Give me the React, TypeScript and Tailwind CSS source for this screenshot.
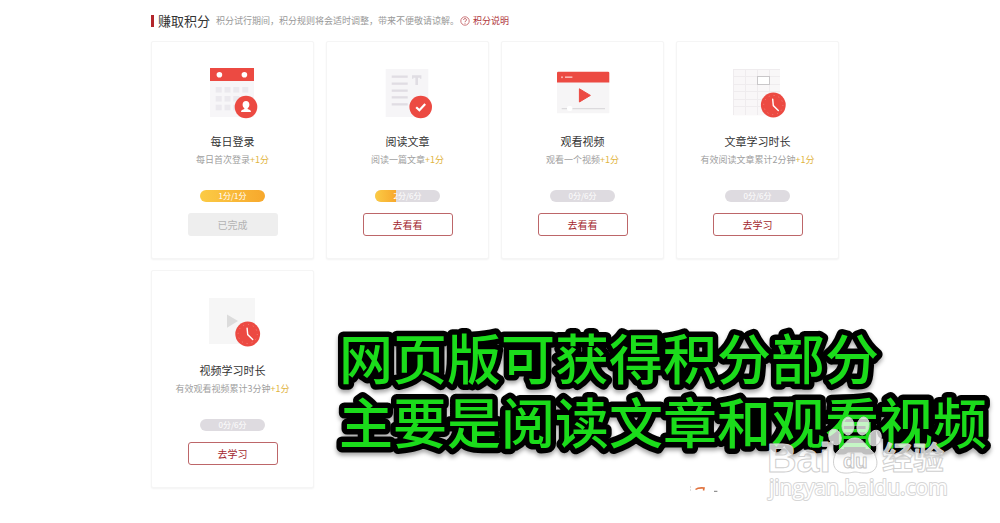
import React from 'react';

type Task = {
  title: string;
  desc: string;
  progress: string;
  percent: number;
  action: string;
  done?: boolean;
  icon: React.ReactNode;
};

const Clock: React.FC<{ cx: number; cy: number }> = ({ cx, cy }) => (
  <g transform={`translate(${cx} ${cy})`}>
    <circle r="12.4" fill="#ec4a42" />
    <circle r="9.6" fill="none" stroke="#f5827c" strokeWidth="1" strokeDasharray="1 4.03" />
    <path d="M-0.6 -5.8 L0 0.6 L5 5.4" fill="none" stroke="#fff" strokeWidth="1.4" strokeLinecap="round" />
  </g>
);

const LoginIcon = () => (
  <svg viewBox="0 0 51 51" className="size-[51px] overflow-visible" aria-hidden="true">
    <rect x="3" y="14" width="44" height="36" fill="#f7f6f8" />
    <rect x="3" y="1" width="44" height="13" fill="#ec4a42" />
    <circle cx="12.4" cy="7.7" r="2.8" fill="#fff" />
    <circle cx="37.4" cy="7.7" r="2.8" fill="#fff" />
    {[20, 29, 37.7].map((y) =>
      [8.7, 17.5, 26.3, 35.3].map((x) => (
        <rect key={`${x}-${y}`} x={x} y={y} width="6" height="5.6" fill="#ebe9ee" />
      ))
    )}
    <circle cx="39" cy="40" r="11.3" fill="#ec4a42" />
    <path
      d="M39 34 C36.8 34 35.6 35.6 35.6 37.6 C35.6 39.2 36.2 40.6 37.4 41.4 V42 C35.6 42.5 34 43 34 45 H44 C44 43 42.4 42.5 40.6 42 V41.4 C41.8 40.6 42.4 39.2 42.4 37.6 C42.4 35.6 41.2 34 39 34 Z"
      fill="#fff"
    />
  </svg>
);

const ArticleIcon = () => (
  <svg viewBox="0 0 51 51" className="size-[51px] overflow-visible" aria-hidden="true">
    <rect x="3.7" y="2" width="42.6" height="48" fill="#f6f5f7" />
    {[8.5, 15.5, 22.5, 29.2, 36.2].map((y) => (
      <rect key={y} x="9.7" y={y} width="16" height="2.3" fill="#e0dde3" />
    ))}
    <path d="M30 8.3 H39.4 V11.8 H38 V10.8 H36 V18 H33.4 V10.8 H31.4 V11.8 H30 Z" fill="#e0dde3" />
    <circle cx="38.7" cy="40" r="11.3" fill="#ec4a42" />
    <path d="M34.2 40.2 L37.4 43.2 L43.2 37" fill="none" stroke="#fff" strokeWidth="2.2" />
  </svg>
);

const VideoIcon = () => (
  <svg viewBox="0 0 51 51" className="size-[51px] overflow-visible" aria-hidden="true">
    <path d="M0 15 H52.3 V46.3 H0 Z" fill="#f6f5f6" />
    <path d="M0 15.4 V6 Q0 4.8 1.2 4.8 H51 Q52.3 4.8 52.3 6 V15.4 Z" fill="#ec4a42" />
    <circle cx="5" cy="10.2" r="1" fill="#f9b5b1" />
    <rect x="8" y="9.4" width="7.4" height="1.6" fill="#f9b5b1" />
    <path d="M22.4 21.8 L33.4 28.4 L22.4 35 Z" fill="#ec4a42" stroke="#ec4a42" strokeLinejoin="round" />
    <rect x="4.7" y="41.2" width="43.3" height="1" fill="#d5d4d6" />
    <rect x="10" y="39" width="5.4" height="5" rx="2" fill="#fff" />
  </svg>
);

const ArticleTimeIcon = () => (
  <svg viewBox="0 0 51 51" className="size-[51px] overflow-visible" aria-hidden="true">
    <rect x="1.3" y="2" width="46.7" height="46.4" fill="#f9f7f8" />
    <path
      d="M1.5 2 V48 M13.5 2 V48 M25.5 2 V48 M37.5 2 V48 M1.3 2.5 H48 M1.3 9.5 H48 M1.3 17.5 H48 M1.3 24.5 H48 M1.3 32.5 H48 M1.3 39.5 H48"
      stroke="#efecee"
      fill="none"
    />
    <rect x="25.5" y="9.5" width="12" height="8" fill="#fff" stroke="#c9c7c9" />
    <Clock cx={41.3} cy={38} />
  </svg>
);

const VideoTimeIcon = () => (
  <svg viewBox="0 0 51 51" className="size-[51px] overflow-visible" aria-hidden="true">
    <rect x="2" y="2" width="46" height="46" fill="#f6f6f6" />
    <path d="M20 18.4 L31 25 L20 31.8 Z" fill="#dcdcdc" />
    <Clock cx={40.7} cy={38} />
  </svg>
);

const tasks: Task[] = [
  { title: '每日登录', desc: '每日首次登录', progress: '1分/1分', percent: 100, action: '已完成', done: true, icon: <LoginIcon /> },
  { title: '阅读文章', desc: '阅读一篇文章', progress: '2分/6分', percent: 33, action: '去看看', icon: <ArticleIcon /> },
  { title: '观看视频', desc: '观看一个视频', progress: '0分/6分', percent: 0, action: '去看看', icon: <VideoIcon /> },
  { title: '文章学习时长', desc: '有效阅读文章累计2分钟', progress: '0分/6分', percent: 0, action: '去学习', icon: <ArticleTimeIcon /> },
  { title: '视频学习时长', desc: '有效观看视频累计3分钟', progress: '0分/6分', percent: 0, action: '去学习', icon: <VideoTimeIcon /> },
];

const TaskCard: React.FC<{ task: Task }> = ({ task }) => (
  <li className="flex flex-col items-center rounded-xs border border-[#f5f5f5] bg-white pt-[25px] pb-[22px] shadow-[0_1px_2px_rgba(0,0,0,0.05)]">
    {task.icon}
    <h2 className="mt-[15px] text-[11px] leading-4 text-[#333]">{task.title}</h2>
    <p className="mt-[3px] text-[9px] leading-4 whitespace-nowrap text-[#a0a0a0]">
      {task.desc}
      <span className="text-[#dfb440]">+1分</span>
    </p>
    <div className="relative mt-[22px] h-3 w-[65px] overflow-hidden rounded-full bg-[#dedbe0]">
      <div
        className="h-full bg-linear-to-r from-[#fbcb45] to-[#f7a82c]"
        style={{ width: `${task.percent}%` }}
      />
      <span className="absolute inset-0 text-center text-[8px] leading-3 text-white">{task.progress}</span>
    </div>
    {task.done ? (
      <button disabled className="mt-[11px] h-[23px] w-[90px] rounded-[3px] bg-[#eeeeee] text-[10px] leading-none text-[#b3b3b3]">
        {task.action}
      </button>
    ) : (
      <button className="mt-[11px] h-[23px] w-[90px] rounded-[3px] border border-[#bd6669] bg-white text-[10px] leading-none text-[#a3282d]">
        {task.action}
      </button>
    )}
  </li>
);

const Caption = () => (
  <svg
    viewBox="0 0 660 140"
    className="absolute top-[325px] left-[335px] h-[140px] w-[660px] overflow-visible drop-shadow-[0_3px_2px_rgba(0,0,0,0.35)]"
  >
    <g
      fontSize="54"
      fontWeight="500"
      fontFamily="Noto Sans CJK SC, sans-serif"
      fill="#1bdc1b"
      stroke="#000"
      strokeWidth="11"
      strokeLinejoin="round"
      paintOrder="stroke"
    >
      <text x="4" y="55">网页版可获得积分部分</text>
      <text x="4" y="119">主要是阅读文章和观看视频</text>
    </g>
  </svg>
);

const Watermark = () => (
  <div className="absolute top-[416px] left-[768px]" aria-hidden="true">
    <svg viewBox="0 0 180 90" className="h-[90px] w-[180px] overflow-visible">
      <g fill="#fff" fillOpacity="0.75" stroke="#cfcfcf" strokeWidth="1" strokeLinejoin="round">
        <text x="-1" y="56" fontSize="41" fontWeight="700" fontFamily="Liberation Sans, sans-serif">
          Bai
        </text>
        <ellipse cx="67" cy="21" rx="6" ry="8" transform="rotate(-20 67 21)" />
        <ellipse cx="80" cy="10" rx="6" ry="9" />
        <ellipse cx="95" cy="10" rx="6" ry="9" transform="rotate(10 95 10)" />
        <ellipse cx="107" cy="22" rx="6" ry="8" transform="rotate(20 107 22)" />
        <path d="M87 22 C79 22 77 29 71 34 C63 41 63 56 76 57 C82 57.5 84 56 87 56 C90 56 93 57.5 99 57 C112 56 111 41 103 34 C97 29 95 22 87 22 Z" />
        <text x="75" y="52" fontSize="20" fontWeight="700" fontFamily="Liberation Sans, sans-serif" stroke="#c4c4c4">
          du
        </text>
        <text x="114" y="53" fontSize="31" fontWeight="700" fontFamily="Noto Sans CJK SC, sans-serif">
          经验
        </text>
      </g>
      <text
        x="1"
        y="79"
        fontSize="21"
        fontFamily="Open Sans, sans-serif"
        fill="#fff"
        stroke="#d6d6d6"
        strokeWidth="2"
        strokeLinejoin="round"
        paintOrder="stroke"
      >
        jingyan.baidu.com
      </text>
    </svg>
  </div>
);

const App: React.FC = () => {
  return (
    <main className="relative min-h-screen overflow-hidden bg-white font-['Noto_Sans_CJK_SC',sans-serif]">
      <section className="ml-[151px] max-w-[688px] pt-[13px]">
        <header className="flex h-4 items-center whitespace-nowrap">
          <span className="h-3 w-[3px] bg-[#b3262b]" />
          <h1 className="ml-1 text-[13px] leading-4 text-[#333]">赚取积分</h1>
          <p className="ml-1.5 text-[9px] leading-4 text-[#999]">
            积分试行期间，积分规则将会适时调整，带来不便敬请谅解。
          </p>
          <a href="#rules" className="ml-px flex items-center gap-[3px] text-[9px] leading-4 text-[#b0383c]">
            <svg viewBox="0 0 10 10" className="size-[10px]" aria-hidden="true">
              <circle cx="5" cy="5" r="4.2" fill="none" stroke="#c0565a" strokeWidth="0.8" />
              <path d="M3.6 4 C3.6 2.1 6.5 2.1 6.5 3.9 C6.5 5 5 4.9 5 6.1 M5 6.9 V7.7" fill="none" stroke="#b0383c" strokeWidth="0.8" />
            </svg>
            积分说明
          </a>
        </header>
        <ul className="mt-3 grid grid-cols-4 gap-x-3 gap-y-[11px]">
          {tasks.map((task) => (
            <TaskCard key={task.title} task={task} />
          ))}
        </ul>
      </section>

      {/* caption laid over the empty part of the grid */}
      <Caption />

      <svg viewBox="0 0 30 8" className="absolute top-[485px] left-[689px] h-2 w-[30px]" aria-hidden="true">
        <path d="M1 2 h1 M1 5 h1" stroke="#bbb" />
        <path d="M6.5 4.5 Q9 2.5 15 3 L14.5 5.5" fill="none" stroke="#e0713c" strokeWidth="1.6" />
        <path d="M25 6.3 h3.4" stroke="#777" />
      </svg>

      <Watermark />
    </main>
  );
};

export default App;
